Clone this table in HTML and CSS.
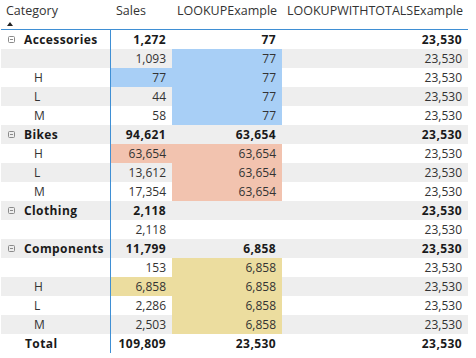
FILE: index.html
```html
<!DOCTYPE html>
<html>
<head>
<meta charset="utf-8">
<link rel="stylesheet" href="styles.css">
</head>
<body>
<div class="matrix">
  <div class="row head">
    <div class="cell hcat"><span>Category</span><i class="sort"></i></div>
    <div class="cell">Sales</div>
    <div class="cell">LOOKUPExample</div>
    <div class="cell">LOOKUPWITHTOTALSExample</div>
  </div>

  <div class="row grp">
    <div class="cell cat"><svg class="exp" width="7" height="7" viewBox="0 0 7 7"><rect x="0.5" y="0.5" width="6" height="6" rx="1"/><line x1="2" y1="3.5" x2="5" y2="3.5"/></svg>Accessories</div>
    <div class="cell num">1,272</div>
    <div class="cell num">77</div>
    <div class="cell num">23,530</div>
  </div>
  <div class="row alt">
    <div class="cell cat sub"></div>
    <div class="cell num">1,093</div>
    <div class="cell num blue">77</div>
    <div class="cell num">23,530</div>
  </div>
  <div class="row">
    <div class="cell cat sub">H</div>
    <div class="cell num blue">77</div>
    <div class="cell num blue">77</div>
    <div class="cell num">23,530</div>
  </div>
  <div class="row alt">
    <div class="cell cat sub">L</div>
    <div class="cell num">44</div>
    <div class="cell num blue">77</div>
    <div class="cell num">23,530</div>
  </div>
  <div class="row">
    <div class="cell cat sub">M</div>
    <div class="cell num">58</div>
    <div class="cell num blue">77</div>
    <div class="cell num">23,530</div>
  </div>

  <div class="row grp alt">
    <div class="cell cat"><svg class="exp" width="7" height="7" viewBox="0 0 7 7"><rect x="0.5" y="0.5" width="6" height="6" rx="1"/><line x1="2" y1="3.5" x2="5" y2="3.5"/></svg>Bikes</div>
    <div class="cell num">94,621</div>
    <div class="cell num">63,654</div>
    <div class="cell num">23,530</div>
  </div>
  <div class="row">
    <div class="cell cat sub">H</div>
    <div class="cell num salmon">63,654</div>
    <div class="cell num salmon">63,654</div>
    <div class="cell num">23,530</div>
  </div>
  <div class="row alt">
    <div class="cell cat sub">L</div>
    <div class="cell num">13,612</div>
    <div class="cell num salmon">63,654</div>
    <div class="cell num">23,530</div>
  </div>
  <div class="row">
    <div class="cell cat sub">M</div>
    <div class="cell num">17,354</div>
    <div class="cell num salmon">63,654</div>
    <div class="cell num">23,530</div>
  </div>

  <div class="row grp alt">
    <div class="cell cat"><svg class="exp" width="7" height="7" viewBox="0 0 7 7"><rect x="0.5" y="0.5" width="6" height="6" rx="1"/><line x1="2" y1="3.5" x2="5" y2="3.5"/></svg>Clothing</div>
    <div class="cell num">2,118</div>
    <div class="cell num"></div>
    <div class="cell num">23,530</div>
  </div>
  <div class="row">
    <div class="cell cat sub"></div>
    <div class="cell num">2,118</div>
    <div class="cell num"></div>
    <div class="cell num">23,530</div>
  </div>

  <div class="row grp alt">
    <div class="cell cat"><svg class="exp" width="7" height="7" viewBox="0 0 7 7"><rect x="0.5" y="0.5" width="6" height="6" rx="1"/><line x1="2" y1="3.5" x2="5" y2="3.5"/></svg>Components</div>
    <div class="cell num">11,799</div>
    <div class="cell num">6,858</div>
    <div class="cell num">23,530</div>
  </div>
  <div class="row">
    <div class="cell cat sub"></div>
    <div class="cell num">153</div>
    <div class="cell num yellow">6,858</div>
    <div class="cell num">23,530</div>
  </div>
  <div class="row alt">
    <div class="cell cat sub">H</div>
    <div class="cell num yellow">6,858</div>
    <div class="cell num yellow">6,858</div>
    <div class="cell num">23,530</div>
  </div>
  <div class="row">
    <div class="cell cat sub">L</div>
    <div class="cell num">2,286</div>
    <div class="cell num yellow">6,858</div>
    <div class="cell num">23,530</div>
  </div>
  <div class="row alt">
    <div class="cell cat sub">M</div>
    <div class="cell num">2,503</div>
    <div class="cell num yellow">6,858</div>
    <div class="cell num">23,530</div>
  </div>

  <div class="row grp total">
    <div class="cell cat tot">Total</div>
    <div class="cell num">109,809</div>
    <div class="cell num">23,530</div>
    <div class="cell num">23,530</div>
  </div>
</div>
</body>
</html>
```

FILE: styles.css
```css
html, body {
  margin: 0;
  padding: 0;
  background: #ffffff;
}

body {
  font-family: "Open Sans", "Noto Sans", sans-serif;
  font-size: 12px;
  color: #333333;
}

.matrix {
  padding-left: 1px;
  width: 467px;
}

.row {
  display: grid;
  grid-template-columns: 110px 61px 110px 186px;
  height: 19px;
}

.row.alt {
  background: #eeeeee;
}

.cell {
  box-sizing: border-box;
  display: flex;
  align-items: center;
  padding: 0 6px 0 5px;
  white-space: nowrap;
  overflow: hidden;
  line-height: 19px;
}

.num {
  justify-content: flex-end;
}

.cat {
  border-right: 1px solid #3f8fd4;
}

.sub {
  padding-left: 33px;
}

.row.head {
  height: 29px;
  border-bottom: 1px solid #3f8fd4;
  font-size: 12.5px;
  color: #333333;
}

.row.head .cell {
  align-items: flex-start;
  padding-top: 3px;
  line-height: 16px;
}

.hcat {
  flex-direction: column;
}

.sort {
  display: block;
  width: 0;
  height: 0;
  margin: 3px 0 0 1px;
  border-left: 3px solid transparent;
  border-right: 3px solid transparent;
  border-bottom: 4px solid #222222;
}

.grp {
  font-weight: 700;
  color: #1a1a1a;
  letter-spacing: 0.4px;
}

.grp .cat {
  padding-left: 7px;
}

.grp .cat.tot {
  padding-left: 24px;
}

.exp {
  flex: none;
  margin-right: 9px;
  fill: none;
  stroke: #8a8a8a;
  stroke-width: 1;
}

.blue {
  background: #a8cff6;
}

.salmon {
  background: #f2c3af;
}

.yellow {
  background: #ecdd9f;
}
```
